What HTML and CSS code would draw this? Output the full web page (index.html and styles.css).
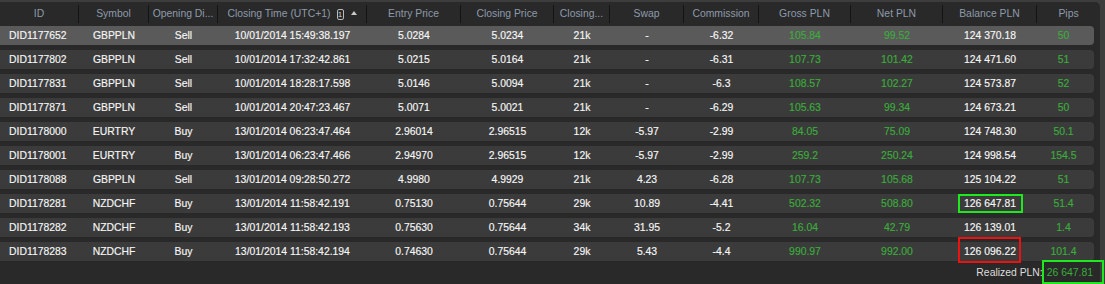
FILE: index.html
```html
<!DOCTYPE html>
<html>
<head>
<meta charset="utf-8">
<link rel="stylesheet" href="styles.css">
</head>
<body>
<div class="panel">
  <div class="grid head">
    <div class="hc">ID</div>
    <div class="hc">Symbol</div>
    <div class="hc">Opening Di...</div>
    <div class="hc sort"><span>Closing Time (UTC+1)</span><span class="badge">1</span><span class="tri"></span></div>
    <div class="hc">Entry Price</div>
    <div class="hc">Closing Price</div>
    <div class="hc">Closing...</div>
    <div class="hc">Swap</div>
    <div class="hc">Commission</div>
    <div class="hc">Gross PLN</div>
    <div class="hc">Net PLN</div>
    <div class="hc">Balance PLN</div>
    <div class="hc">Pips</div>
  </div>
  <div class="rows">
    <div class="grid row sel"><div class="c id">DID1177652</div><div class="c">GBPPLN</div><div class="c">Sell</div><div class="c">10/01/2014 15:49:38.197</div><div class="c">5.0284</div><div class="c">5.0234</div><div class="c">21k</div><div class="c">-</div><div class="c">-6.32</div><div class="c g">105.84</div><div class="c g">99.52</div><div class="c">124 370.18</div><div class="c g pips">50</div></div>
    <div class="grid row"><div class="c id">DID1177802</div><div class="c">GBPPLN</div><div class="c">Sell</div><div class="c">10/01/2014 17:32:42.861</div><div class="c">5.0215</div><div class="c">5.0164</div><div class="c">21k</div><div class="c">-</div><div class="c">-6.31</div><div class="c g">107.73</div><div class="c g">101.42</div><div class="c">124 471.60</div><div class="c g pips">51</div></div>
    <div class="grid row"><div class="c id">DID1177831</div><div class="c">GBPPLN</div><div class="c">Sell</div><div class="c">10/01/2014 18:28:17.598</div><div class="c">5.0146</div><div class="c">5.0094</div><div class="c">21k</div><div class="c">-</div><div class="c">-6.3</div><div class="c g">108.57</div><div class="c g">102.27</div><div class="c">124 573.87</div><div class="c g pips">52</div></div>
    <div class="grid row"><div class="c id">DID1177871</div><div class="c">GBPPLN</div><div class="c">Sell</div><div class="c">10/01/2014 20:47:23.467</div><div class="c">5.0071</div><div class="c">5.0021</div><div class="c">21k</div><div class="c">-</div><div class="c">-6.29</div><div class="c g">105.63</div><div class="c g">99.34</div><div class="c">124 673.21</div><div class="c g pips">50</div></div>
    <div class="grid row"><div class="c id">DID1178000</div><div class="c">EURTRY</div><div class="c">Buy</div><div class="c">13/01/2014 06:23:47.464</div><div class="c">2.96014</div><div class="c">2.96515</div><div class="c">12k</div><div class="c">-5.97</div><div class="c">-2.99</div><div class="c g">84.05</div><div class="c g">75.09</div><div class="c">124 748.30</div><div class="c g pips">50.1</div></div>
    <div class="grid row"><div class="c id">DID1178001</div><div class="c">EURTRY</div><div class="c">Buy</div><div class="c">13/01/2014 06:23:47.466</div><div class="c">2.94970</div><div class="c">2.96515</div><div class="c">12k</div><div class="c">-5.97</div><div class="c">-2.99</div><div class="c g">259.2</div><div class="c g">250.24</div><div class="c">124 998.54</div><div class="c g pips">154.5</div></div>
    <div class="grid row"><div class="c id">DID1178088</div><div class="c">GBPPLN</div><div class="c">Sell</div><div class="c">13/01/2014 09:28:50.272</div><div class="c">4.9980</div><div class="c">4.9929</div><div class="c">21k</div><div class="c">4.23</div><div class="c">-6.28</div><div class="c g">107.73</div><div class="c g">105.68</div><div class="c">125 104.22</div><div class="c g pips">51</div></div>
    <div class="grid row"><div class="c id">DID1178281</div><div class="c">NZDCHF</div><div class="c">Buy</div><div class="c">13/01/2014 11:58:42.191</div><div class="c">0.75130</div><div class="c">0.75644</div><div class="c">29k</div><div class="c">10.89</div><div class="c">-4.41</div><div class="c g">502.32</div><div class="c g">508.80</div><div class="c">126 647.81</div><div class="c g pips">51.4</div></div>
    <div class="grid row"><div class="c id">DID1178282</div><div class="c">NZDCHF</div><div class="c">Buy</div><div class="c">13/01/2014 11:58:42.193</div><div class="c">0.75630</div><div class="c">0.75644</div><div class="c">34k</div><div class="c">31.95</div><div class="c">-5.2</div><div class="c g">16.04</div><div class="c g">42.79</div><div class="c">126 139.01</div><div class="c g pips">1.4</div></div>
    <div class="grid row"><div class="c id">DID1178283</div><div class="c">NZDCHF</div><div class="c">Buy</div><div class="c">13/01/2014 11:58:42.194</div><div class="c">0.74630</div><div class="c">0.75644</div><div class="c">29k</div><div class="c">5.43</div><div class="c">-4.4</div><div class="c g">990.97</div><div class="c g">992.00</div><div class="c">126 096.22</div><div class="c g pips">101.4</div></div>
  </div>
  <div class="footer"><span class="flabel">Realized PLN:</span><span class="g">26 647.81</span></div>
</div>
<div class="mark mark-green mark-a"></div>
<div class="mark mark-red mark-b"></div>
<div class="mark mark-green mark-c"></div>
</body>
</html>
```
FILE: styles.css
```css
html, body {
  margin: 0;
  padding: 0;
}
body {
  width: 1105px;
  height: 284px;
  overflow: hidden;
  background: #3d3d3d;
  font-family: "Liberation Sans", Arial, sans-serif;
  font-size: 10.4px;
  color: #f6f6f6;
  position: relative;
}
.panel {
  margin-top: 2px;
  width: 1100px;
  height: 282px;
  background: #292929;
  border-radius: 0 5px 0 0;
}
.grid {
  display: grid;
  grid-template-columns: 79px 70px 69px 149px 94px 93px 56px 74px 75px 92px 92px 94px 1fr;
}
.head {
  height: 24px;
  align-items: center;
}
.hc {
  height: 18px;
  line-height: 18px;
  text-align: center;
  color: #8d9aab;
  border-right: 1px solid #141414;
  white-space: nowrap;
  overflow: hidden;
}
.hc:last-child {
  border-right: none;
}
.sort {
  display: flex;
  align-items: center;
  justify-content: center;
}
.badge {
  margin-left: 6px;
  width: 5px;
  height: 9px;
  border: 1px solid #b9b9b9;
  border-radius: 2px;
  color: #d0d0d0;
  font-size: 8px;
  line-height: 9px;
  text-align: center;
}
.tri {
  margin-left: 7px;
  margin-top: -3px;
  width: 0;
  height: 0;
  border-left: 3px solid transparent;
  border-right: 3px solid transparent;
  border-bottom: 4px solid #c9c9c9;
}
.rows {
  display: flex;
  flex-direction: column;
  gap: 5px;
  margin-right: 6px;
}
.row {
  height: 19px;
  align-items: center;
  background: #3b3b3b;
  border-radius: 0 4px 4px 0;
}
.row.sel {
  background: #5a5a5a;
}
.c {
  text-align: center;
  white-space: nowrap;
  -webkit-text-stroke: 0.15px currentColor;
}
.c.id {
  text-align: left;
  padding-left: 9px;
}
.c.pips {
  padding-right: 4px;
}
.g {
  color: #3aad3a;
}
.footer {
  display: flex;
  justify-content: flex-end;
  align-items: center;
  gap: 4px;
  height: 23px;
  padding-right: 7px;
}
.flabel {
  color: #dedede;
}
.mark {
  position: absolute;
  box-sizing: border-box;
  border: 2px solid;
}
.mark-green {
  border-color: #1ee81e;
}
.mark-red {
  border-color: #ee1111;
}
.mark-a {
  left: 958px;
  top: 194px;
  width: 65px;
  height: 19px;
}
.mark-b {
  left: 958px;
  top: 237px;
  width: 63px;
  height: 26px;
}
.mark-c {
  left: 1042px;
  top: 260px;
  width: 62px;
  height: 24px;
}
```
